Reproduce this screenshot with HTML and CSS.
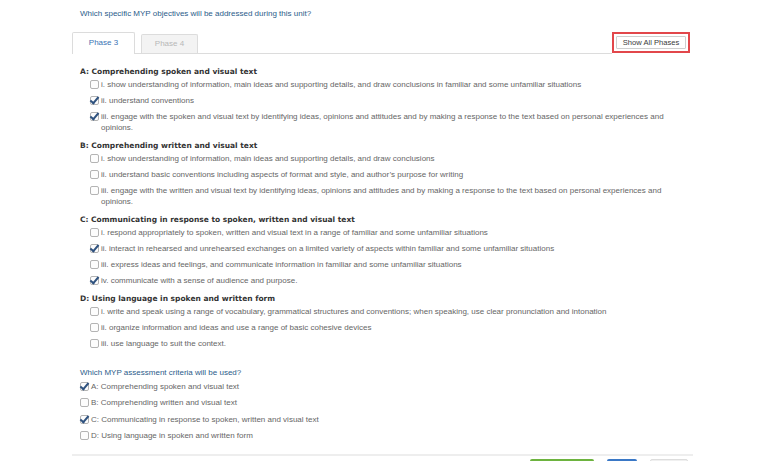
FILE: index.html
```html
<!DOCTYPE html>
<html>
<head>
<meta charset="utf-8">
<link rel="stylesheet" href="styles.css">
</head>
<body>
<div class="page">
  <p class="question">Which specific MYP objectives will be addressed during this unit?</p>
  <div class="tabbar">
    <div class="tabs">
      <div class="tab active">Phase 3</div>
      <div class="tab">Phase 4</div>
    </div>
    <div class="highlight"><button class="btn">Show All Phases</button></div>
  </div>

  <div class="objectives">
    <div class="section">
      <div class="head">A: Comprehending spoken and visual text</div>
      <label class="item"><span class="cb"></span><span>i. show understanding of information, main ideas and supporting details, and draw conclusions in familiar and some unfamiliar situations</span></label>
      <label class="item"><span class="cb on"></span><span>ii. understand conventions</span></label>
      <label class="item"><span class="cb on"></span><span>iii. engage with the spoken and visual text by identifying ideas, opinions and attitudes and by making a response to the text based on personal experiences and opinions.</span></label>
    </div>
    <div class="section">
      <div class="head">B: Comprehending written and visual text</div>
      <label class="item"><span class="cb"></span><span>i. show understanding of information, main ideas and supporting details, and draw conclusions</span></label>
      <label class="item"><span class="cb"></span><span>ii. understand basic conventions including aspects of format and style, and author’s purpose for writing</span></label>
      <label class="item"><span class="cb"></span><span>iii. engage with the written and visual text by identifying ideas, opinions and attitudes and by making a response to the text based on personal experiences and opinions.</span></label>
    </div>
    <div class="section">
      <div class="head">C: Communicating in response to spoken, written and visual text</div>
      <label class="item"><span class="cb"></span><span>i. respond appropriately to spoken, written and visual text in a range of familiar and some unfamiliar situations</span></label>
      <label class="item"><span class="cb on"></span><span>ii. interact in rehearsed and unrehearsed exchanges on a limited variety of aspects within familiar and some unfamiliar situations</span></label>
      <label class="item"><span class="cb"></span><span>iii. express ideas and feelings, and communicate information in familiar and some unfamiliar situations</span></label>
      <label class="item"><span class="cb on"></span><span>iv. communicate with a sense of audience and purpose.</span></label>
    </div>
    <div class="section">
      <div class="head">D: Using language in spoken and written form</div>
      <label class="item"><span class="cb"></span><span>i. write and speak using a range of vocabulary, grammatical structures and conventions; when speaking, use clear pronunciation and intonation</span></label>
      <label class="item"><span class="cb"></span><span>ii. organize information and ideas and use a range of basic cohesive devices</span></label>
      <label class="item"><span class="cb"></span><span>iii. use language to suit the context.</span></label>
    </div>
  </div>

  <div class="criteria">
    <p class="question q2">Which MYP assessment criteria will be used?</p>
    <label class="item"><span class="cb on"></span><span>A: Comprehending spoken and visual text</span></label>
    <label class="item"><span class="cb"></span><span>B: Comprehending written and visual text</span></label>
    <label class="item"><span class="cb on"></span><span>C: Communicating in response to spoken, written and visual text</span></label>
    <label class="item"><span class="cb"></span><span>D: Using language in spoken and written form</span></label>
  </div>

  <div class="footer">
    <span class="fbtn green"></span>
    <span class="fbtn blue"></span>
    <span class="fbtn gray"></span>
  </div>
</div>
</body>
</html>
```
FILE: styles.css
```css
html, body {
  margin: 0;
  padding: 0;
  background: #fff;
}
body {
  font-family: "Liberation Sans", Arial, sans-serif;
  font-size: 8px;
  color: #666;
  overflow: hidden;
  height: 461px;
}
.page {
  margin-left: 72px;
  width: 621px;
  padding-top: 8px;
}
.question {
  margin: 0 0 0 8px;
  line-height: 11px;
  color: #2b5c8a;
  font-size: 8px;
}
.tabbar {
  display: flex;
  align-items: flex-end;
  margin-top: 13px;
}
.tabs {
  display: flex;
  gap: 6px;
  flex: 1;
  border-bottom: 1px solid #dcdcdc;
  height: 20px;
  align-items: flex-end;
}
.tab {
  height: 18px;
  line-height: 18px;
  width: 55px;
  text-align: center;
  color: #b8b8b8;
  background: #f3f3f3;
  border: 1px solid #dcdcdc;
  border-bottom: none;
  border-radius: 2px 2px 0 0;
}
.tab.active {
  width: 61px;
  height: 21px;
  line-height: 20px;
  background: #fff;
  color: #3a73b4;
  margin-bottom: -1px;
}
.highlight {
  border: 2px solid #e2474b;
  padding: 2px;
  margin-right: 3px;
  margin-bottom: 1px;
  box-sizing: border-box;
  width: 78px;
  height: 21px;
  display: flex;
}
.btn {
  flex: 1;
  font-family: "Liberation Sans", Arial, sans-serif;
  font-size: 7.6px;
  color: #3a3a3a;
  background: #fff;
  border: 1px solid #cfcfcf;
  border-radius: 1px;
  padding: 0;
  margin: 0;
}
.objectives {
  margin-top: 10px;
  margin-left: 8px;
  margin-right: 26px;
}
.section {
  padding-top: 2px;
}
.head {
  font-family: "DejaVu Sans", Verdana, sans-serif;
  font-weight: bold;
  font-size: 7.5px;
  color: #333;
  line-height: 11px;
  margin-bottom: 2px;
}
.item {
  display: flex;
  align-items: flex-start;
  line-height: 11px;
  margin-bottom: 5px;
  padding-left: 10px;
}
.criteria .item {
  padding-left: 0;
  margin-bottom: 5.4px;
}
.cb {
  flex: none;
  width: 7px;
  height: 7px;
  border: 1px solid #b4b4b4;
  border-radius: 2px;
  margin-top: 1px;
  margin-right: 2px;
  background: #fdfdfd;
  position: relative;
}
.cb.on::after {
  content: "";
  position: absolute;
  left: 1px;
  top: -2px;
  width: 3px;
  height: 7px;
  border-right: 2.4px solid #2f527f;
  border-bottom: 2.4px solid #2f527f;
  transform: rotate(40deg);
}
.criteria {
  margin-top: 18px;
  margin-left: 8px;
}
.q2 {
  margin: 0 0 3px 0;
}
.footer {
  margin-top: 13px;
  border-top: 2px solid #eeeeee;
  height: 20px;
  display: flex;
  justify-content: flex-end;
  padding-right: 5px;
  gap: 13px;
}
.fbtn {
  margin-top: 3px;
  height: 12px;
  border-radius: 2px 2px 0 0;
}
.fbtn.green { width: 64px; background: #6db33f; }
.fbtn.blue { width: 30px; background: #3a78c6; }
.fbtn.gray { width: 36px; background: #f0f0f0; border: 1px solid #ddd; }
```
